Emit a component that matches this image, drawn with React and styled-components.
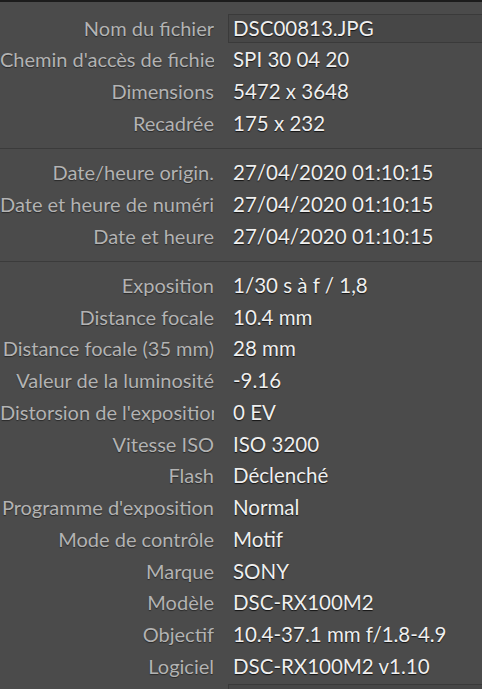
import styled, { createGlobalStyle } from "styled-components";

const GlobalStyle = createGlobalStyle`
  html, body {
    margin: 0;
    padding: 0;
    background: #4b4b4b;
    overflow: hidden;
  }
`;

const Panel = styled.div`
  width: 482px;
  height: 689px;
  overflow: hidden;
  background: #4b4b4b;
  border-top: 2px solid #1c1c1c;
  box-sizing: border-box;
  font-family: Lato, "Open Sans", "Liberation Sans", sans-serif;
  font-size: 20px;
`;

const Section = styled.div`
  display: flex;
  flex-direction: column;
  padding: ${(p) => (p.$first ? "10px 0 8px" : "8px 0")};
  border-bottom: ${(p) => (p.$last ? "none" : "1px solid #3b3b3b")};
`;

const Row = styled.div`
  display: grid;
  grid-template-columns: 214px 1fr;
  column-gap: 14px;
  height: ${(p) => p.$h || 32}px;
  box-sizing: border-box;
  padding-bottom: ${(p) => (p.$field ? 0 : 2)}px;
  align-items: center;
`;

const Label = styled.div`
  color: #b3b3b3;
  text-align: right;
  white-space: nowrap;
  overflow: hidden;
  line-height: 24px;
  text-shadow: 0 1px 1px rgba(0, 0, 0, 0.45);
`;

const Value = styled.div`
  color: #efefef;
  white-space: nowrap;
  padding-left: 5px;
  line-height: 24px;
  font-size: 20.5px;
  text-shadow: 0 1px 1px rgba(0, 0, 0, 0.75);
`;

const Field = styled.div`
  color: #efefef;
  white-space: nowrap;
  height: 29px;
  line-height: 26px;
  font-size: 20.5px;
  box-sizing: border-box;
  padding-left: 4px;
  margin-right: -4px;
  background: #474747;
  border: 1px solid #3a3a3a;
  border-right: none;
  text-shadow: 0 1px 1px rgba(0, 0, 0, 0.75);
`;

const sections = [
  [
    ["Nom du fichier", "DSC00813.JPG", "field"],
    ["Chemin d'accès de fichier", "SPI 30 04 20"],
    ["Dimensions", "5472 x 3648"],
    ["Recadrée", "175 x 232"],
  ],
  [
    ["Date/heure origin.", "27/04/2020 01:10:15"],
    ["Date et heure de numérisation", "27/04/2020 01:10:15"],
    ["Date et heure", "27/04/2020 01:10:15"],
  ],
  [
    ["Exposition", "1/30 s à f / 1,8"],
    ["Distance focale", "10.4 mm"],
    ["Distance focale (35 mm)", "28 mm"],
    ["Valeur de la luminosité", "-9.16"],
    ["Distorsion de l'exposition", "0 EV"],
    ["Vitesse ISO", "ISO 3200"],
    ["Flash", "Déclenché"],
    ["Programme d'exposition", "Normal"],
    ["Mode de contrôle", "Motif"],
    ["Marque", "SONY"],
    ["Modèle", "DSC-RX100M2"],
    ["Objectif", "10.4-37.1 mm f/1.8-4.9"],
    ["Logiciel", "DSC-RX100M2 v1.10"],
    ["Artiste", "", "field"],
  ],
];

const App = () => (
  <>
    <GlobalStyle />
    <Panel>
      {sections.map((rows, i) => (
        <Section key={i} $first={i === 0} $last={i === sections.length - 1}>
          {rows.map(([label, value, kind]) => (
            <Row key={label} $h={i === 2 ? 31.75 : 32} $field={kind === "field"}>
              <Label>{label}</Label>
              {kind === "field" ? <Field>{value}</Field> : <Value>{value}</Value>}
            </Row>
          ))}
        </Section>
      ))}
    </Panel>
  </>
);

export default App;
